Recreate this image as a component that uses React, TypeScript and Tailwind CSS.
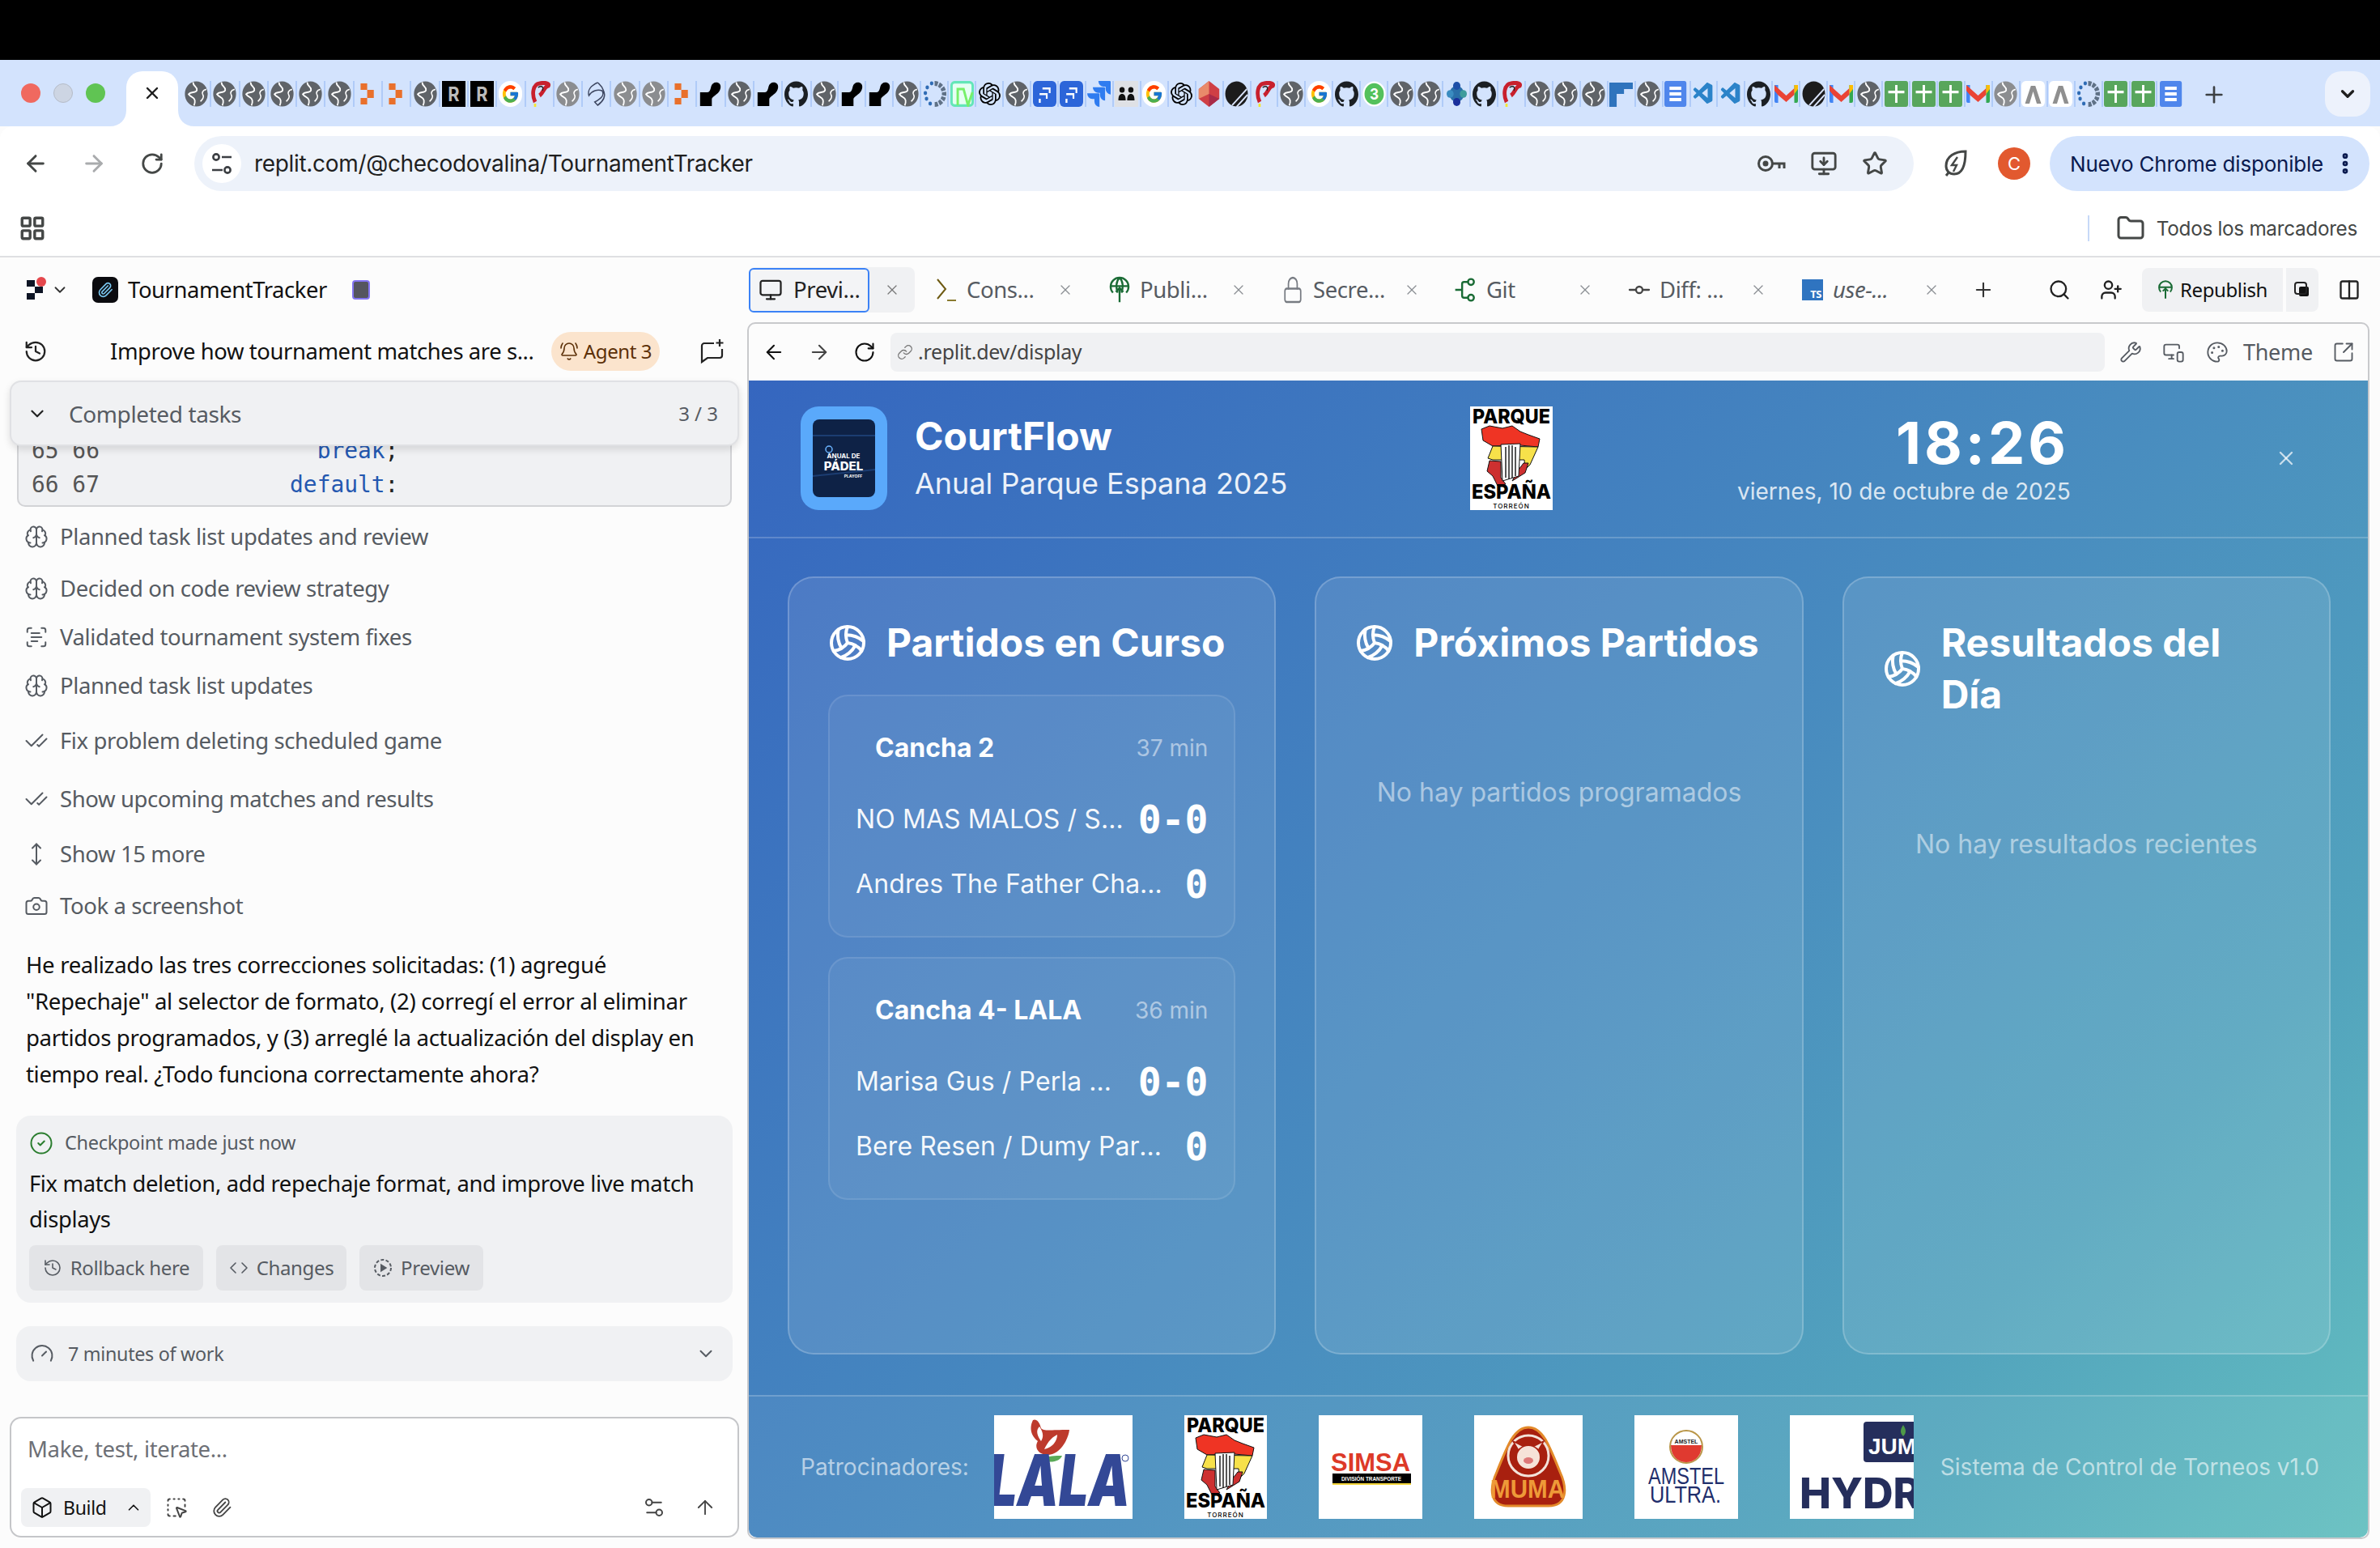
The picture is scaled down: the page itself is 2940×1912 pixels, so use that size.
import type { ReactNode } from "react";
import {
  ArrowLeft, ArrowRight, ArrowUp, BellRing, Box, Brain, Camera, CheckCheck, ChevronDown, ChevronUp, CircleCheck,
  Code, Columns2, EllipsisVertical, Folder, Gauge, GitCommitHorizontal, History, LayoutGrid, Link, Lock,
  Monitor, MonitorDown, MonitorSmartphone, MoveVertical, Palette, Paperclip, Plus, RotateCw,
  ScanText, Search, Settings2, SquareArrowOutUpRight, SquareDashedMousePointer, Star, UserPlus, Volleyball, Wrench, X,
} from "lucide-react";
import { FcGoogle } from "react-icons/fc";
import { SiGithub, SiJira, SiOpenai } from "react-icons/si";
import { VscVscode } from "react-icons/vsc";

const favicons = [
  "globe", "globe", "globe", "globe", "globe", "globe", "orange", "orange", "globe", "r", "r", "google", "red",
  "light", "curl", "light", "light", "orange", "hook", "globe", "hook", "github", "globe", "hook", "hook", "globe",
  "gear", "mint", "openai", "globe", "jiraTile", "jiraTile", "jira", "people", "google", "openai", "gem", "stripe",
  "red", "globe", "google", "github", "whats", "globe", "globe", "blob", "github", "red", "globe", "globe", "globe",
  "tblue", "globe", "docs", "vs", "vs", "github", "gmail", "stripe", "gmail", "globe", "sheets", "sheets", "sheets",
  "gmail", "light", "caret", "caret", "gear", "sheets", "sheets", "docs",
];

const Favicon = ({ kind }: { kind: string }) => {
  const cls = "w-[29px] h-[32px] shrink-0";
  const common = { className: cls, viewBox: "0 0 16 16", preserveAspectRatio: "none" };
  if (kind === "globe" || kind === "light") {
    return (
      <svg {...common}>
        <circle cx="8" cy="8" r="7.8" fill={kind === "globe" ? "#5f6368" : "#8b8d90"} />
        <path d="M6 .8C5.2 3 8.8 3.4 8.4 5.6C8 7.6 4 6.4 2.8 8.2C4.4 10.4 6.6 9.6 7 12C7.2 13.2 6.8 14.4 6.4 15.2" fill="none" stroke="#fff" strokeWidth="1" />
        <path d="M14.8 5.2C12.4 5.6 11.4 7.4 12.6 8.8C13.4 9.8 12.2 11.6 10.8 12.6" fill="none" stroke="#fff" strokeWidth=".9" />
      </svg>
    );
  }
  if (kind === "orange") {
    return (
      <svg {...common}>
        <path d="M3 1.5h4.5v4H3zM7.5 5.5H12v5H7.5zM3 10.5h4.5v4H3z" fill="#e9702b" />
      </svg>
    );
  }
  if (kind === "r") {
    return (
      <svg {...common}>
        <rect width="16" height="16" fill="#000" />
        <text x="8" y="12.5" textAnchor="middle" fontSize="12" fontWeight="700" fill="#bbb" fontFamily="Inter, sans-serif">R</text>
      </svg>
    );
  }
  if (kind === "google") {
    return (
      <div className="flex w-[29px] h-[32px] shrink-0 items-center justify-center rounded-full bg-white">
        <FcGoogle className="w-[23px] h-[26px]" preserveAspectRatio="none" />
      </div>
    );
  }
  if (kind === "red") {
    return (
      <svg {...common}>
        <path d="M5 13C2.5 8 3.5 2 8 1.5C11 1 15 1.2 14 3C11 3.5 11 7 8 9" fill="none" stroke="#c8202d" strokeWidth="2.6" />
        <path d="M7 4C9 3 11 3 10 6" fill="none" stroke="#222" strokeWidth=".7" />
        <rect x="4.2" y="14" width="1.5" height="2" fill="#f5e82f" />
      </svg>
    );
  }
  if (kind === "curl") {
    return (
      <svg {...common}>
        <path d="M9 1C4 3 2 6 3 9C5 6 9 5 12 6C14 9 11 11 7 13C8 14 9 15 9 15C12 13 15 10 13 6C12 3 10 2 9 1" fill="none" stroke="#3d4660" strokeWidth=".8" />
      </svg>
    );
  }
  if (kind === "hook") {
    return (
      <svg {...common}>
        <path d="M1 7H6C7.5 7 8 5.5 8.5 3.5C9 1.5 11 .5 13 1C15.5 1.7 15.5 4.5 14 6.5C12.5 8.5 9.5 9.5 9 11V15.5H1Z" fill="#000" />
      </svg>
    );
  }
  if (kind === "github") return <SiGithub className={`${cls} text-[#1b1f23]`} preserveAspectRatio="none" />;
  if (kind === "openai") {
    return (
      <div className="flex w-[29px] h-[32px] shrink-0 items-center justify-center">
        <SiOpenai className="w-[27px] h-[28px] text-black" preserveAspectRatio="none" />
      </div>
    );
  }
  if (kind === "gear") {
    return (
      <svg {...common}>
        <path d="M8 1.5A6.5 6.5 0 1 1 8 14.5" fill="none" stroke="#5f7186" strokeWidth="3" strokeDasharray="2.2 .8" />
        <circle cx="6" cy="1.5" r="1.2" fill="#2f6cb5" />
        <circle cx="3" cy="4" r="1.2" fill="#2f6cb5" />
        <circle cx="1.7" cy="7.5" r="1.2" fill="#2f6cb5" />
        <circle cx="2.5" cy="11" r="1.2" fill="#2f6cb5" />
        <circle cx="5" cy="14" r="1.2" fill="#2f6cb5" />
      </svg>
    );
  }
  if (kind === "mint") {
    return (
      <svg {...common}>
        <rect x=".8" y=".8" width="14.4" height="14.4" rx="2" fill="#e6fff4" stroke="#63e6b8" strokeWidth="1.6" />
        <path d="M5 15V5h4l3 10 3-8" fill="none" stroke="#77f06a" strokeWidth="1.6" />
      </svg>
    );
  }
  if (kind === "jiraTile") {
    return (
      <svg {...common}>
        <rect width="16" height="16" rx="3" fill="#2c65d9" />
        <path d="M6.5 4h5.5v3.5h-1.2V5.3H6.5zM4.5 7.5h5.5V11H8.8V8.8H4.5zM4 11h1.3v2.5H4z" fill="#fff" />
      </svg>
    );
  }
  if (kind === "jira") return <SiJira className={`${cls} text-[#2f7cf0]`} preserveAspectRatio="none" />;
  if (kind === "people") {
    return (
      <svg {...common}>
        <rect width="16" height="16" fill="#dfe1e5" />
        <circle cx="5" cy="5.5" r="1.8" fill="#111" />
        <circle cx="11" cy="5.5" r="1.8" fill="#111" />
        <path d="M2.5 12c0-3 1-4 2.5-4s2.5 1 2.5 4zM8.5 12c0-3 1-4 2.5-4s2.5 1 2.5 4z" fill="#111" />
      </svg>
    );
  }
  if (kind === "gem") {
    return (
      <svg {...common}>
        <path d="M8 0L15 5V11L8 16L1 11V5Z" fill="#cf3f45" />
        <path d="M8 0L1 5V11L8 8Z" fill="#e98a6a" />
        <path d="M8 8L15 11L8 16Z" fill="#a82b49" />
      </svg>
    );
  }
  if (kind === "stripe") {
    return (
      <svg {...common}>
        <circle cx="8" cy="8" r="7.7" fill="#1c1c1c" />
        <path d="M15 5L5 15M15.5 8.5L8 16M13 2" fill="none" stroke="#dbe5fb" strokeWidth="1" />
      </svg>
    );
  }
  if (kind === "whats") {
    return (
      <svg {...common}>
        <circle cx="8" cy="8" r="7.8" fill="#fff" />
        <circle cx="8" cy="8" r="6.6" fill="#54c15c" />
        <text x="8" y="11.5" textAnchor="middle" fontSize="9.5" fontWeight="700" fill="#fff" fontFamily="Inter, sans-serif">3</text>
      </svg>
    );
  }
  if (kind === "blob") {
    return (
      <svg {...common}>
        <circle cx="8" cy="8" r="5" fill="#2a6fa8" />
        <circle cx="8" cy="3" r="2.5" fill="#1d4fa8" />
        <circle cx="8" cy="13" r="2.5" fill="#1a2f9c" />
        <circle cx="3.5" cy="8" r="2.4" fill="#3a8cc0" />
        <circle cx="12.5" cy="8" r="2.4" fill="#3f9c9c" />
      </svg>
    );
  }
  if (kind === "tblue") {
    return (
      <svg {...common}>
        <path d="M0 1h16v4h-6v3h-5v8H0z" fill="#2f74bd" />
      </svg>
    );
  }
  if (kind === "docs") {
    return (
      <svg {...common}>
        <rect width="15" height="16" rx="1.5" fill="#4f86ec" />
        <path d="M3.5 3.5h8v2h-8zM3.5 7h8v2h-8zM3.5 10.5h8v2h-8z" fill="#fff" />
      </svg>
    );
  }
  if (kind === "vs") return <VscVscode className={`${cls} text-[#2b83c9]`} preserveAspectRatio="none" />;
  if (kind === "gmail") {
    return (
      <svg {...common}>
        <path d="M0 2.5h2.5v11H1a1 1 0 0 1-1-1z" fill="#4285f4" />
        <path d="M13.5 2.5H16v10a1 1 0 0 1-1 1h-1.5z" fill="#34a853" />
        <path d="M0 2.5L8 9l5.5-4.5v4L8 13 2.5 8.7 0 6z" fill="#ea4335" />
        <path d="M13.5 2.5H16V5l-2.5 3z" fill="#fbbc04" />
      </svg>
    );
  }
  if (kind === "sheets") {
    return (
      <svg {...common}>
        <rect width="16" height="16" rx="1.5" fill="#58a65c" />
        <path d="M7.2 2.5h1.6v11H7.2zM2.5 6h11v1.6h-11z" fill="#fff" />
      </svg>
    );
  }
  // caret
  return (
    <svg {...common}>
      <rect width="16" height="16" rx="3" fill="#fff" />
      <path d="M2.5 14L6.5 3h3l4 11h-3L8 6.5 5.5 14z" fill="#8f8f8f" />
    </svg>
  );
};

const ParqueLogo = () => (
  <svg className="w-[102px] h-[128px] shrink-0 bg-white" viewBox="0 0 102 128">
    <text x="51" y="21" textAnchor="middle" fontSize="25" fontWeight="800" fontFamily="Inter, sans-serif" textLength="96" lengthAdjust="spacingAndGlyphs">PARQUE</text>
    <path d="M14 28L24 24L40 27L52 24L62 31L72 35L86 40L84 50L62 48L28 49L16 42Z" fill="#ef3424" stroke="#111" strokeWidth="1" />
    <path d="M28 49L84 50L74 72L68 78L67 66L28 66L22 64Z" fill="#f7e14a" stroke="#111" strokeWidth="1" />
    <path d="M24 67L38 68L38 88L44 96L34 98L28 86L21 80Z" fill="#cd3030" stroke="#111" strokeWidth="1" />
    <path d="M66 70L72 70L68 82L52 92L60 78Z" fill="#cd3030" stroke="#111" strokeWidth="1" />
    <path d="M38 47L62 46L60 86L40 92Z" fill="#fff" stroke="#111" strokeWidth="1" />
    <path d="M44 50V88M48 48V90M52 48V88M56 50V86" stroke="#111" strokeWidth="1.4" />
    <text x="51" y="114" textAnchor="middle" fontSize="25" fontWeight="800" fontFamily="Inter, sans-serif" textLength="98" lengthAdjust="spacingAndGlyphs">ESPAÑA</text>
    <text x="51" y="126" textAnchor="middle" fontSize="8" fontWeight="500" fontFamily="Inter, sans-serif" letterSpacing="1">TORREÓN</text>
  </svg>
);

const LalaLogo = () => (
  <svg className="w-[171px] h-[128px] shrink-0 bg-white overflow-hidden" viewBox="0 0 171 128">
    <path d="M48 6C52 4 56 8 58 16C62 20 68 18 93 18C92 28 84 44 72 48C58 52 48 42 54 32C44 24 44 14 48 6Z" fill="#bd3a2c" />
    <path d="M56 14C60 20 62 26 58 32C52 24 52 18 56 14ZM78 24C78 32 72 40 62 42C66 34 70 28 78 24Z" fill="#fff" />
    <path d="M60 54C66 50 76 50 84 50C82 56 72 60 60 56Z" fill="#5aaa58" />
    <text x="-8" y="112" fontSize="88" fontWeight="900" fontStyle="italic" fill="#334896" fontFamily="Inter, sans-serif" textLength="176" lengthAdjust="spacingAndGlyphs">LALA</text>
    <circle cx="162" cy="53" r="4" fill="none" stroke="#334896" />
  </svg>
);

const SimsaLogo = () => (
  <svg className="w-[128px] h-[128px] shrink-0 bg-white" viewBox="0 0 128 128">
    <text x="64" y="69" textAnchor="middle" fontSize="32" fontWeight="800" fill="#dd3a28" fontFamily="Liberation Sans, sans-serif" textLength="98" lengthAdjust="spacingAndGlyphs">SIMSA</text>
    <rect x="17" y="72" width="97" height="12" fill="#000" />
    <rect x="17" y="84" width="97" height="2" fill="#f2d43a" />
    <text x="65" y="81" textAnchor="middle" fontSize="7" fontWeight="700" fill="#fff" fontFamily="Liberation Sans, sans-serif" textLength="74" lengthAdjust="spacingAndGlyphs">DIVISIÓN TRANSPORTE</text>
  </svg>
);

const MumaLogo = () => (
  <svg className="w-[134px] h-[128px] shrink-0 bg-white" viewBox="0 0 134 128">
    <path d="M67 15C84 15 92 35 106 70C116 92 114 112 92 112H42C20 112 18 92 28 70C42 35 50 15 67 15Z" fill="#a8200f" stroke="#e38a2a" strokeWidth="3" />
    <circle cx="67" cy="50" r="25" fill="#a8200f" stroke="#f3e3da" strokeWidth="3" />
    <circle cx="67" cy="52" r="15" fill="#f6e2d8" stroke="#a8200f" strokeWidth="2" />
    <path d="M54 42L48 32L60 38M80 42L86 32L74 38" fill="#f6e2d8" stroke="#a8200f" strokeWidth="1.5" />
    <ellipse cx="67" cy="56" rx="6" ry="4" fill="#d77" />
    <text x="66" y="102" textAnchor="middle" fontSize="31" fontWeight="700" fill="#ee9a38" fontFamily="Liberation Sans, sans-serif" textLength="92" lengthAdjust="spacingAndGlyphs">MUMA</text>
  </svg>
);

const AmstelLogo = () => (
  <svg className="w-[128px] h-[128px] shrink-0 bg-white" viewBox="0 0 128 128">
    <ellipse cx="64" cy="39" rx="20" ry="20" fill="#fff" stroke="#b99648" strokeWidth="2" />
    <path d="M45 37H83C83 51 74 58 64 58C54 58 45 51 45 37Z" fill="#e03a30" />
    <text x="64" y="35" textAnchor="middle" fontSize="7" fontWeight="700" fill="#222" fontFamily="Liberation Sans, sans-serif">AMSTEL</text>
    <text x="64" y="85" textAnchor="middle" fontSize="30" fontWeight="500" fill="#1f2e6c" fontFamily="Liberation Sans, sans-serif" textLength="94" lengthAdjust="spacingAndGlyphs">AMSTEL</text>
    <text x="63" y="108" textAnchor="middle" fontSize="30" fontWeight="500" fill="#1f2e6c" fontFamily="Liberation Sans, sans-serif" textLength="88" lengthAdjust="spacingAndGlyphs">ULTRA.</text>
  </svg>
);

const HydroLogo = () => (
  <svg className="w-[153px] h-[128px] shrink-0 bg-white overflow-hidden" viewBox="0 0 153 128">
    <rect x="91" y="8" width="80" height="50" rx="4" fill="#252e5c" />
    <path d="M140 12C136 18 136 22 140 26C144 22 144 18 140 12Z" fill="#4f9a48" />
    <text x="97" y="48" fontSize="28" fontWeight="800" fill="#fff" fontFamily="Liberation Sans, sans-serif">JUMEX</text>
    <text x="12" y="115" fontSize="52" fontWeight="800" fill="#252e5c" fontFamily="Inter, sans-serif">HYDRO</text>
  </svg>
);

const CourtTile = () => (
  <svg className="w-[77px] h-[96px]" viewBox="0 0 77 96">
    <rect width="77" height="96" rx="8" fill="#0e2246" />
    <path d="M0 20H77M0 70L77 62" stroke="#1c3d72" strokeWidth="2" />
    <circle cx="20" cy="37" r="4" fill="none" stroke="#6bb4ff" strokeWidth="1.5" />
    <text x="38" y="48" textAnchor="middle" fontSize="8" fontWeight="700" fill="#fff" fontFamily="Inter, sans-serif">ANUAL DE</text>
    <text x="38" y="63" textAnchor="middle" fontSize="15" fontWeight="800" fill="#fff" fontFamily="Inter, sans-serif">PÁDEL</text>
    <text x="50" y="72" textAnchor="middle" fontSize="5" fontWeight="700" fill="#fff" fontFamily="Inter, sans-serif">PLAYOFF</text>
  </svg>
);

const ReplitMark = () => (
  <div className="relative w-[20px] h-[24px] shrink-0">
    <svg className="w-[20px] h-[24px]" viewBox="0 0 20 24">
      <path d="M0 0h10v8H0zM10 8h10v8H10zM0 16h10v8H0z" fill="#0e1525" />
    </svg>
    <span className="absolute -top-[4px] left-[12px] w-[12px] h-[12px] rounded-full bg-[#e5484d]" />
  </div>
);

const GlobeUp = () => (
  <svg className="w-[28px] h-[34px]" viewBox="0 0 24 28" fill="none" stroke="#1a6b35" strokeWidth="2">
    <path d="M5 17A9.5 9.5 0 1 1 19 17M2.5 10H21.5M12 1C8 5 8 12 10 17M12 1C16 5 16 12 14 17M12 27V12M8 16L12 12L16 16" />
  </svg>
);

const GitNodes = () => (
  <svg className="w-[30px] h-[34px]" viewBox="0 0 24 28" fill="none" stroke="#1a6b35" strokeWidth="2">
    <circle cx="17" cy="6" r="3" />
    <circle cx="17" cy="22" r="3" />
    <path d="M1 14H8M14 6H10C8.5 6 8 7 8 8V20C8 21 8.5 22 10 22H14" />
  </svg>
);

const Prompt = () => (
  <svg className="w-[26px] h-[30px]" viewBox="0 0 26 30" fill="none" stroke="#6e5a12" strokeWidth="2">
    <path d="M2 2L12 14L2 26" />
    <path d="M14 28H25" stroke="#8a7a30" />
  </svg>
);

const DashedPlay = () => (
  <svg className="w-[24px] h-[24px]" viewBox="0 0 24 24" fill="none" stroke="#565b62" strokeWidth="2">
    <circle cx="12" cy="12" r="10" strokeDasharray="4 2.3" />
    <path d="M10 8.5L15.5 12L10 15.5Z" fill="#565b62" />
  </svg>
);

const NewChat = () => (
  <svg className="w-[30px] h-[32px] ml-[50px]" viewBox="0 0 30 32" fill="none" stroke="#222" strokeWidth="2.2">
    <path d="M17 6H5C3.5 6 2 7.5 2 9V29L9 24H24C26 24 27 22.5 27 21V13" />
    <path d="M24 1V10M19.5 5.5H28.5" />
  </svg>
);

const ToolbarKey = () => (
  <svg className="w-[36px] h-[28px]" viewBox="0 0 36 28" fill="none" stroke="#444746" strokeWidth="3">
    <circle cx="11" cy="14" r="8.5" />
    <circle cx="11" cy="14" r="2" fill="#444746" />
    <path d="M20 14H34V20M28 14V20" />
  </svg>
);

const LeafBolt = () => (
  <svg className="w-[30px] h-[36px]" viewBox="0 0 30 36" fill="none" stroke="#444746" strokeWidth="3">
    <path d="M27 3C14 3 3 9 3 21C3 27 7 31 13 31C23 31 27 20 27 3Z" />
    <path d="M17 10L10 20H16L12 28" strokeWidth="2.4" />
    <path d="M3 33L7 28" />
  </svg>
);

const TuneChip = () => (
  <svg className="w-[26px] h-[28px]" viewBox="0 0 26 28" fill="none" stroke="#3c3f43" strokeWidth="2.6">
    <circle cx="6" cy="6" r="3.6" />
    <path d="M13 6H25M1 22H14" />
    <circle cx="20" cy="22" r="3.6" />
  </svg>
);

const tabs = [
  { label: "Cons...", icon: <Prompt /> },
  { label: "Publi...", icon: <GlobeUp /> },
  { label: "Secre...", icon: <Lock className="w-[26px] h-[36px] text-[#777b82]" strokeWidth={1.6} preserveAspectRatio="none" /> },
  { label: "Git", icon: <GitNodes /> },
  { label: "Diff: ...", icon: <GitCommitHorizontal className="text-[#444]" size={32} strokeWidth={1.7} /> },
  { label: "use-...", icon: <span className="flex w-[26px] h-[26px] items-end justify-end bg-[#2f74c0] pr-[2px] text-[13px] leading-[15px] font-bold text-white">TS</span>, italic: true },
];

const activity = [
  { text: "Planned task list updates and review", Icon: Brain, gap: "mt-[15px]" },
  { text: "Decided on code review strategy", Icon: Brain, gap: "mt-[20px]" },
  { text: "Validated tournament system fixes", Icon: ScanText, gap: "mt-[16px]" },
  { text: "Planned task list updates", Icon: Brain, gap: "mt-[16px]" },
  { text: "Fix problem deleting scheduled game", Icon: CheckCheck, gap: "mt-[24px]" },
  { text: "Show upcoming matches and results", Icon: CheckCheck, gap: "mt-[28px]" },
  { text: "Show 15 more", Icon: MoveVertical, gap: "mt-[24px]" },
  { text: "Took a screenshot", Icon: Camera, gap: "mt-[20px]" },
];

const matches = [
  { court: "Cancha 2", time: "37 min", a: "NO MAS MALOS / Sergio Ramos", b: "Andres The Father Chavez / Luis" },
  { court: "Cancha 4- LALA", time: "36 min", a: "Marisa Gus / Perla Hernandez", b: "Bere Resen / Dumy Paredes" },
];

const BrowserChrome = () => (
  <>
    <div className="h-[74px] bg-black" />
    <div className="h-[82px] bg-[#d3e3fd] flex items-start pl-[26px]">
      <div className="flex gap-[16px] mt-[29px]">
        <span className="w-[24px] h-[24px] rounded-full bg-[#f0695f]" />
        <span className="w-[24px] h-[24px] rounded-full bg-[#cdd5e3] border border-[#b5bcc8]" />
        <span className="w-[24px] h-[24px] rounded-full bg-[#60c453]" />
      </div>
      <div className="relative ml-[26px] mt-[14px] w-[64px] h-[68px] bg-white rounded-t-[20px] flex items-center justify-center pb-[14px]">
        <svg className="absolute -left-[20px] bottom-0 w-[20px] h-[20px]" viewBox="0 0 20 20"><path d="M20 0V20H0C12 20 20 12 20 0Z" fill="#fff" /></svg>
        <svg className="absolute -right-[20px] bottom-0 w-[20px] h-[20px]" viewBox="0 0 20 20"><path d="M0 0V20H20C8 20 0 12 0 0Z" fill="#fff" /></svg>
        <X size={24} strokeWidth={2.4} className="text-[#1f1f1f]" />
      </div>
      <div className="relative flex ml-[6px] mt-[26px]">
        {favicons.map((kind, i) => (
          <div key={i} className={`${i < 22 ? "w-[35.3px]" : "w-[33.95px]"} h-[32px] flex items-center justify-center border-r-2 border-[#b0cbf8] last:border-r-0 overflow-hidden`}>
            <Favicon kind={kind} />
          </div>
        ))}
      </div>
      <Plus size={32} strokeWidth={2} className="ml-[20px] mt-[27px] text-[#3c4043]" />
      <div className="ml-auto mr-[12px] mt-[14px] w-[56px] h-[56px] rounded-[20px] bg-[#edf2fc] flex items-center justify-center">
        <ChevronDown size={26} strokeWidth={3} className="text-[#1f1f1f]" />
      </div>
    </div>
    <div className="h-[92px] bg-white rounded-t-[16px] flex items-center font-['Inter',sans-serif]">
      <ArrowLeft size={32} strokeWidth={2.2} className="ml-[28px] text-[#444746]" />
      <ArrowRight size={32} strokeWidth={2.2} className="ml-[40px] text-[#a9abad]" />
      <RotateCw size={30} strokeWidth={2.2} className="ml-[41px] text-[#444746]" />
      <div className="ml-[37px] h-[68px] w-[2124px] rounded-[34px] bg-[#edf2fa] flex items-center pl-[10px]">
        <div className="w-[48px] h-[48px] rounded-full bg-white flex items-center justify-center"><TuneChip /></div>
        <span className="ml-[16px] text-[28px] tracking-[-0.32px] text-[#1f1f1f]">replit.com/@checodovalina/TournamentTracker</span>
        <div className="ml-auto flex items-center mr-[32px]">
          <ToolbarKey />
          <MonitorDown size={34} strokeWidth={2} className="ml-[30px] text-[#444746]" />
          <Star size={32} strokeWidth={2.2} className="ml-[30px] text-[#444746]" />
        </div>
      </div>
      <div className="ml-[37px]"><LeafBolt /></div>
      <span className="ml-[37px] w-[40px] h-[40px] rounded-full bg-[#e2592f] text-white text-[22px] flex items-center justify-center">C</span>
      <div className="ml-[24px] h-[68px] w-[395px] rounded-[34px] bg-[#d3e3fd] flex items-center pl-[25px] text-[26px] tracking-[-0.2px] text-[#0a1a4f] whitespace-nowrap">
        Nuevo Chrome disponible
        <EllipsisVertical size={32} strokeWidth={3} className="ml-auto mr-[14px]" />
      </div>
    </div>
    <div className="h-[70px] bg-white border-b-2 border-[#dfe0e2] flex items-center font-['Inter',sans-serif]">
      <LayoutGrid size={34} strokeWidth={2.4} className="ml-[23px] text-[#444746]" />
      <span className="ml-auto w-[2px] h-[32px] bg-[#c7d9f8]" />
      <Folder size={36} strokeWidth={2} className="ml-[33px] text-[#444746]" />
      <span className="ml-[14px] mr-[28px] text-[24.3px] tracking-[-0.3px] text-[#444746]">Todos los marcadores</span>
    </div>
  </>
);

const AgentPanel = () => (
  <div className="w-[925px] shrink-0 flex flex-col font-['Noto_Sans',sans-serif]">
    <div className="h-[80px] flex items-center pl-[33px]">
      <ReplitMark />
      <ChevronDown size={22} className="ml-[10px] text-[#333]" />
      <div className="ml-[29px] w-[32px] h-[32px] rounded-[7px] bg-[#0b0b0f] flex items-center justify-center">
        <Paperclip size={20} className="text-[#79c6ef]" />
      </div>
      <span className="ml-[12px] text-[27.4px] tracking-[-0.4px] text-[#111]">TournamentTracker</span>
      <span className="ml-[31px] w-[22px] h-[24px] rounded-[4px] border-2 border-[#8475f2] bg-[#55555f]" />
    </div>
    <div className="h-[72px] flex items-center pl-[29px]">
      <History size={30} strokeWidth={1.8} className="text-[#222]" />
      <span className="ml-[77px] w-[530px] text-[27.4px] tracking-[-0.4px] text-[#111] whitespace-nowrap">Improve how tournament matches are s...</span>
      <span className="ml-[15px] h-[48px] w-[134px] rounded-full bg-[#fbe4cd] flex items-center justify-center gap-[6px] text-[24px] tracking-[-0.4px] text-[#5c3008]">
        <BellRing size={24} strokeWidth={1.6} />
        Agent 3
      </span>
      <NewChat />
    </div>
    <div className="relative z-10 mx-[12px] h-[81px] rounded-[14px] border-2 border-[#e0e1e4] bg-[#f0f1f3] shadow-[0_4px_10px_rgba(0,0,0,0.12)] flex items-center pl-[19px] pr-[24px] text-[#565b62]">
      <ChevronDown size={26} strokeWidth={2} className="text-[#222]" />
      <span className="ml-[26px] text-[28px] tracking-[-0.4px]">Completed tasks</span>
      <span className="ml-auto text-[24px]">3 / 3</span>
    </div>
    <div className="-mt-[15px] mx-[21px] h-[90px] rounded-b-[10px] border-x-2 border-b-2 border-[#d2d3d6] bg-[#f0f1f3] pl-[16px] font-['DejaVu_Sans_Mono',monospace] text-[27.9px] leading-[42px] whitespace-pre overflow-hidden text-[#555]">
      <div>65 66<span className="text-[#2458b0]">{"                break"}</span><span className="text-[#222]">;</span></div>
      <div>66 67<span className="text-[#2458b0]">{"              default"}</span><span className="text-[#222]">:</span></div>
    </div>
    <div className="flex flex-col pl-[30px] text-[#565b62]">
      {activity.map(({ text, Icon, gap }) => (
        <div key={text} className={`${gap} h-[44px] flex items-center gap-[14px] text-[27.5px] tracking-[-0.4px]`}>
          <Icon size={30} strokeWidth={1.6} className="shrink-0" />
          {text}
        </div>
      ))}
    </div>
    <p className="mt-[28px] mx-[32px] text-[27.6px] leading-[45px] tracking-[-0.35px] text-[#111]">
      He realizado las tres correcciones solicitadas: (1) agregué "Repechaje" al selector de formato, (2) corregí el error al eliminar partidos programados, y (3) arreglé la actualización del display en tiempo real. ¿Todo funciona correctamente ahora?
    </p>
    <div className="mt-[29px] mx-[20px] h-[231px] rounded-[18px] bg-[#f0f1f3] px-[16px] pt-[16px]">
      <div className="flex items-center h-[36px] gap-[14px] text-[23.5px] tracking-[-0.3px] text-[#565b62]">
        <CircleCheck size={30} strokeWidth={1.6} className="text-[#2a7d2e]" />
        Checkpoint made just now
      </div>
      <p className="mt-[10px] text-[27.4px] leading-[44px] tracking-[-0.35px] text-[#111]">Fix match deletion, add repechaje format, and improve live match displays</p>
      <div className="mt-[10px] flex gap-[16px] text-[24px] tracking-[-0.35px] text-[#565b62]">
        <span className="h-[56px] w-[215px] rounded-[8px] bg-[#e3e4e7] flex items-center justify-center gap-[10px]"><History size={24} strokeWidth={1.6} />Rollback here</span>
        <span className="h-[56px] w-[161px] rounded-[8px] bg-[#e3e4e7] flex items-center justify-center gap-[10px]"><Code size={24} strokeWidth={1.6} />Changes</span>
        <span className="h-[56px] w-[153px] rounded-[8px] bg-[#e3e4e7] flex items-center justify-center gap-[10px]"><DashedPlay />Preview</span>
      </div>
    </div>
    <div className="mt-[29px] mx-[20px] h-[68px] rounded-[18px] bg-[#f0f1f3] flex items-center pl-[17px] pr-[20px] text-[23.3px] tracking-[-0.3px] text-[#565b62]">
      <Gauge size={30} strokeWidth={1.6} />
      <span className="ml-[17px]">7 minutes of work</span>
      <ChevronDown size={26} strokeWidth={1.8} className="ml-auto" />
    </div>
    <div className="mt-[44px] mx-[12px] h-[149px] rounded-[14px] border-2 border-[#c5c6c9] bg-white flex flex-col">
      <div className="pl-[20px] pt-[19px] h-[86px] text-[27.5px] leading-[38px] tracking-[-0.35px] text-[#6d7076]">Make, test, iterate...</div>
      <div className="flex items-center pl-[12px] pr-[26px] text-[#444]">
        <div className="h-[48px] w-[160px] rounded-[8px] bg-[#f0f1f3] flex items-center pl-[12px] text-[23px] tracking-[-0.3px] text-[#111]">
          <Box size={28} strokeWidth={1.7} />
          <span className="ml-[12px]">Build</span>
          <ChevronUp size={22} strokeWidth={1.8} className="ml-[22px]" />
        </div>
        <SquareDashedMousePointer size={28} strokeWidth={1.7} className="ml-[18px]" />
        <Paperclip size={26} strokeWidth={1.7} className="ml-[29px]" />
        <Settings2 size={30} strokeWidth={1.6} className="ml-auto" />
        <ArrowUp size={28} strokeWidth={1.6} className="ml-[34px]" />
      </div>
    </div>
  </div>
);

const ReplitTabs = () => (
  <div className="h-[80px] pl-[2px] flex items-center text-[#565b62] text-[27.5px] tracking-[-0.4px]">
    <div className="w-[205px] h-[56px] rounded-[8px] bg-[#f0f1f3] flex items-center shrink-0">
      <div className="w-[149px] h-[55px] rounded-[6px] border-2 border-[#3b82f6] bg-[#f3f4f6] flex items-center pl-[10px] gap-[13px] text-[#222]">
        <Monitor size={30} strokeWidth={1.8} />
        Previ...
      </div>
      <X size={20} strokeWidth={1.5} className="ml-[18px] text-[#777]" />
    </div>
    {tabs.map((t) => (
      <div key={t.label} className="ml-[9px] w-[205px] h-[56px] flex items-center shrink-0 relative">
        <span className="absolute left-[13px] w-[34px] flex justify-center">{t.icon}</span>
        <span className={`ml-[55px] w-[112px] ${t.italic ? "italic" : ""}`}>{t.label}</span>
        <X size={20} strokeWidth={1.5} className="text-[#8a8d92]" />
      </div>
    ))}
    <Plus size={28} strokeWidth={1.8} className="ml-[22px] text-[#333]" />
    <Search size={28} strokeWidth={2} className="ml-[66px] text-[#222]" />
    <UserPlus size={28} strokeWidth={2} className="ml-[36px] text-[#222]" />
    <div className="ml-[24px] h-[54px] w-[174px] rounded-l-[8px] bg-[#f0f1f3] flex items-center justify-center gap-[8px] text-[24px] text-[#111]">
      <svg className="w-[20px] h-[26px]" viewBox="0 0 24 28" fill="none" stroke="#1a6b35" strokeWidth="2.4"><path d="M5 17A9.5 9.5 0 1 1 19 17M2.5 10H21.5M12 27V12M8 16L12 12L16 16" /></svg>
      Republish
    </div>
    <div className="relative ml-[4px] h-[54px] w-[40px] rounded-r-[8px] bg-[#f0f1f3] flex items-center justify-center">
      <span className="w-[16px] h-[16px] rounded-[4px] bg-[#111] border-2 border-[#f0f1f3] translate-x-[2px] translate-y-[2px]" />
      <span className="absolute w-[16px] h-[16px] rounded-[4px] border-2 border-[#222] -translate-x-[2px] -translate-y-[2px]" />
    </div>
    <Columns2 size={28} strokeWidth={2} className="ml-[24px] text-[#222]" />
  </div>
);

const MatchCard = ({ court, time, a, b }: { court: string; time: string; a: string; b: string }) => (
  <div className="rounded-[24px] border-2 border-white/10 bg-white/5 px-[32px] py-[32px]">
    <div className="h-[64px] mb-[24px] flex items-center justify-between pl-[24px]">
      <span className="text-[32px] font-bold text-white">{court}</span>
      <span className="text-[28px] text-white/50">{time}</span>
    </div>
    <div className="flex flex-col gap-[16px]">
      <div className="h-[64px] flex items-center gap-[16px]">
        <span className="flex-1 min-w-0 truncate text-[32px] tracking-[0.1px] text-white/95">{a}</span>
        <span className="shrink-0 font-['DejaVu_Sans_Mono',monospace] font-bold text-[48px] text-white">0-0</span>
      </div>
      <div className="h-[64px] flex items-center gap-[16px]">
        <span className="flex-1 min-w-0 truncate text-[32px] tracking-[0.1px] text-white/95">{b}</span>
        <span className="shrink-0 font-['DejaVu_Sans_Mono',monospace] font-bold text-[48px] text-white">0</span>
      </div>
    </div>
  </div>
);

const CardTitle = ({ children }: { children: ReactNode }) => (
  <div className="flex items-center gap-[24px]">
    <Volleyball size={48} strokeWidth={2} className="shrink-0" />
    <h2 className="text-[48px] leading-[64px] font-bold">{children}</h2>
  </div>
);

const Display = () => (
  <div className="flex-1 min-h-0 flex flex-col bg-[linear-gradient(135deg,#3566bf_0%,#4a8fbf_55%,#52a3bd_78%,#65c0c0_100%)] text-white overflow-hidden rounded-b-[10px]">
    <div className="h-[195px] shrink-0 border-b-2 border-white/20 flex items-center pl-[64px] pb-[2px]">
      <div className="w-[107px] h-[128px] rounded-[22px] bg-[#5aa9fb] flex items-center justify-center shrink-0"><CourtTile /></div>
      <div className="ml-[34px] w-[458px]">
        <div className="text-[48px] leading-[62px] font-bold">CourtFlow</div>
        <div className="text-[36px] leading-[54px] text-white/90 whitespace-nowrap">Anual Parque Espana 2025</div>
      </div>
      <div className="ml-[228px]"><ParqueLogo /></div>
      <div className="ml-[228px] w-[410px] text-right">
        <div className="text-[72px] leading-[80px] font-bold tracking-[4px] mt-[2px]">18:26</div>
        <div className="text-[28px] leading-[40px] text-white/80 whitespace-nowrap">viernes, 10 de octubre de 2025</div>
      </div>
      <X size={28} strokeWidth={2} className="ml-[254px] text-white/70" />
    </div>
    <div className="flex-1 min-h-0 grid grid-cols-3 gap-[48px] pl-[48px] pr-[46px] pt-[47px] pb-[50px]">
      <div className="rounded-[32px] border-2 border-white/20 bg-white/10 p-[48px]">
        <CardTitle>Partidos en Curso</CardTitle>
        <div className="mt-[32px] flex flex-col gap-[24px]">
          {matches.map((m) => (
            <MatchCard key={m.court} {...m} />
          ))}
        </div>
      </div>
      <div className="rounded-[32px] border-2 border-white/20 bg-white/10 p-[48px]">
        <CardTitle>Próximos Partidos</CardTitle>
        <p className="mt-[125px] text-center text-[32px] leading-[56px] text-white/50">No hay partidos programados</p>
      </div>
      <div className="rounded-[32px] border-2 border-white/20 bg-white/10 p-[48px]">
        <CardTitle>Resultados del<br />Día</CardTitle>
        <p className="mt-[125px] text-center text-[32px] leading-[56px] text-white/50">No hay resultados recientes</p>
      </div>
    </div>
    <div className="h-[176px] shrink-0 border-t-2 border-white/20 bg-white/5 flex items-center pl-[64px]">
      <span className="text-[28px] text-white/60">Patrocinadores:</span>
      <div className="ml-[31px] flex gap-[64px]">
        <LalaLogo />
        <ParqueLogo />
        <SimsaLogo />
        <MumaLogo />
        <AmstelLogo />
        <HydroLogo />
      </div>
      <span className="ml-[33px] text-[28px] text-white/60 whitespace-nowrap">Sistema de Control de Torneos v1.0</span>
    </div>
  </div>
);

const WorkspaceRight = () => (
  <div className="flex-1 min-w-0 -ml-[2px] flex flex-col pr-[13px] pb-[11px] font-['Inter',sans-serif]">
    <div className="font-['Noto_Sans',sans-serif]"><ReplitTabs /></div>
    <div className="flex-1 min-h-0 flex flex-col rounded-[10px] border-2 border-[#c8c9cc]">
      <div className="h-[70px] shrink-0 flex items-center pl-[17px] text-[#333] font-['Noto_Sans',sans-serif]">
        <ArrowLeft size={28} strokeWidth={1.8} className="text-[#111]" />
        <ArrowRight size={28} strokeWidth={1.8} className="ml-[28px] text-[#444]" />
        <RotateCw size={28} strokeWidth={1.8} className="ml-[28px] text-[#111]" />
        <div className="ml-[18px] h-[48px] w-[1500px] rounded-[8px] bg-[#f0f1f3] flex items-center pl-[8px] gap-[6px] text-[25px] tracking-[-0.3px] text-[#444]">
          <Link size={20} strokeWidth={1.6} className="text-[#777]" />
          .replit.dev/display
        </div>
        <Wrench size={28} strokeWidth={1.6} className="ml-[18px] text-[#565b62]" />
        <MonitorSmartphone size={28} strokeWidth={1.6} className="ml-[25px] text-[#565b62]" />
        <Palette size={28} strokeWidth={1.6} className="ml-[26px] text-[#565b62]" />
        <span className="ml-[18px] text-[27px] tracking-[-0.3px] text-[#565b62]">Theme</span>
        <SquareArrowOutUpRight size={28} strokeWidth={1.6} className="ml-[24px] text-[#565b62]" />
      </div>
      <Display />
    </div>
  </div>
);

export default function App() {
  return (
    <div className="w-[2940px] h-[1912px] overflow-hidden bg-[#fcfcfc] flex flex-col font-['Inter',sans-serif]">
      <BrowserChrome />
      <div className="flex-1 min-h-0 flex">
        <AgentPanel />
        <WorkspaceRight />
      </div>
    </div>
  );
}
